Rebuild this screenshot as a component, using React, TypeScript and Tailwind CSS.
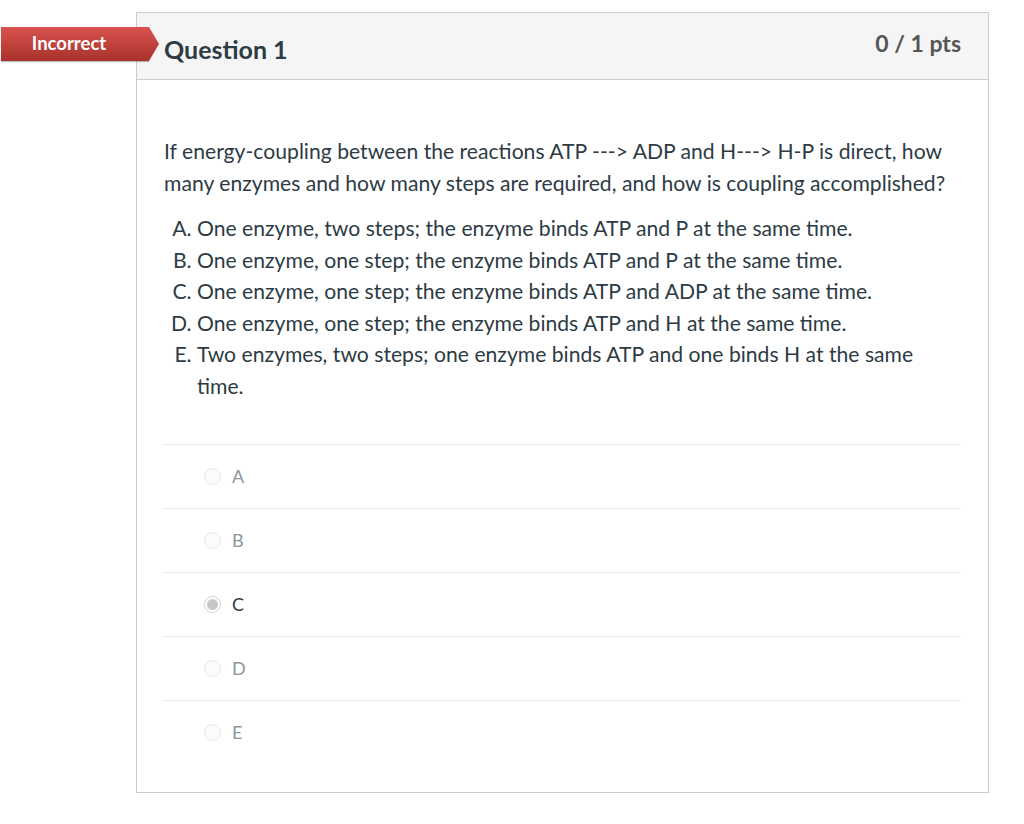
const OPTIONS = [
  "One enzyme, two steps; the enzyme binds ATP and P at the same time.",
  "One enzyme, one step; the enzyme binds ATP and P at the same time.",
  "One enzyme, one step; the enzyme binds ATP and ADP at the same time.",
  "One enzyme, one step; the enzyme binds ATP and H at the same time.",
  "Two enzymes, two steps; one enzyme binds ATP and one binds H at the same time.",
];

const ANSWERS = ["A", "B", "C", "D", "E"];
const SELECTED = "C";

export default function App() {
  return (
    <div className="min-h-[824px] w-[1024px] bg-white pt-3 font-['Lato','Liberation_Sans',sans-serif] text-[#2d3b45]">
      <div className="relative ml-[136px] w-[853px] border border-[#c7cdd1]">
        {/* result ribbon, hangs off the left edge of the card */}
        <div className="absolute -left-[136px] top-[14px] flex h-[34px] w-[158px] items-center">
          <div className="flex h-full w-[148px] items-center justify-center bg-gradient-to-b from-[#d9534f] to-[#a8322b] pr-[12px] text-[18.5px] font-bold text-white shadow-[0_1px_1px_rgba(0,0,0,0.25)]">
            Incorrect
          </div>
          <svg width="10" height="34" viewBox="0 0 10 34" className="block">
            <defs>
              <linearGradient id="rib" x1="0" y1="0" x2="0" y2="1">
                <stop offset="0" stopColor="#d9534f" />
                <stop offset="1" stopColor="#a8322b" />
              </linearGradient>
            </defs>
            <path d="M0 0 L10 17 L0 34 Z" fill="url(#rib)" />
          </svg>
        </div>

        <header className="flex h-[67px] items-center justify-between border-b border-[#c7cdd1] bg-[#f5f5f5] pl-[27px] pr-[27px]">
          <h2 className="pt-[7px] text-[25px] font-bold">Question 1</h2>
          <span className="pb-[5px] text-[23px] font-bold text-[#555]">0 / 1 pts</span>
        </header>

        <div className="px-[27px] pb-[28px] pt-[55px]">
          <p className="text-[21.15px] leading-[32px]">
            If energy-coupling between the reactions ATP ---&gt; ADP and H---&gt; H-P is direct, how many
            enzymes and how many steps are required, and how is coupling accomplished?
          </p>
          <ol className="mt-[14px] list-[upper-alpha] pl-[33px] pr-[40px] text-[21.15px] leading-[31.6px]">
            {OPTIONS.map((o) => (
              <li key={o}>{o}</li>
            ))}
          </ol>

          <div className="mt-[41px]">
            {ANSWERS.map((a) => (
              <Answer key={a} label={a} selected={a === SELECTED} />
            ))}
          </div>
        </div>
      </div>
    </div>
  );
}

function Answer({ label, selected }: { label: string; selected: boolean }) {
  return (
    <div className="flex h-[64px] items-center gap-[11px] border-t border-[#e8eaec] pl-[40px]">
      <span
        className={
          selected
            ? "flex h-[17px] w-[17px] items-center justify-center rounded-full border border-[#d0d0d0] bg-white"
            : "h-[17px] w-[17px] rounded-full border border-[#e6e6e6] bg-[#fbfbfb]"
        }
      >
        {selected && <span className="h-[11px] w-[11px] rounded-full bg-[#c8c8c8]" />}
      </span>
      <span className={selected ? "text-[18px] text-[#2d3b45]" : "text-[18px] text-[#8b969e]"}>{label}</span>
    </div>
  );
}
